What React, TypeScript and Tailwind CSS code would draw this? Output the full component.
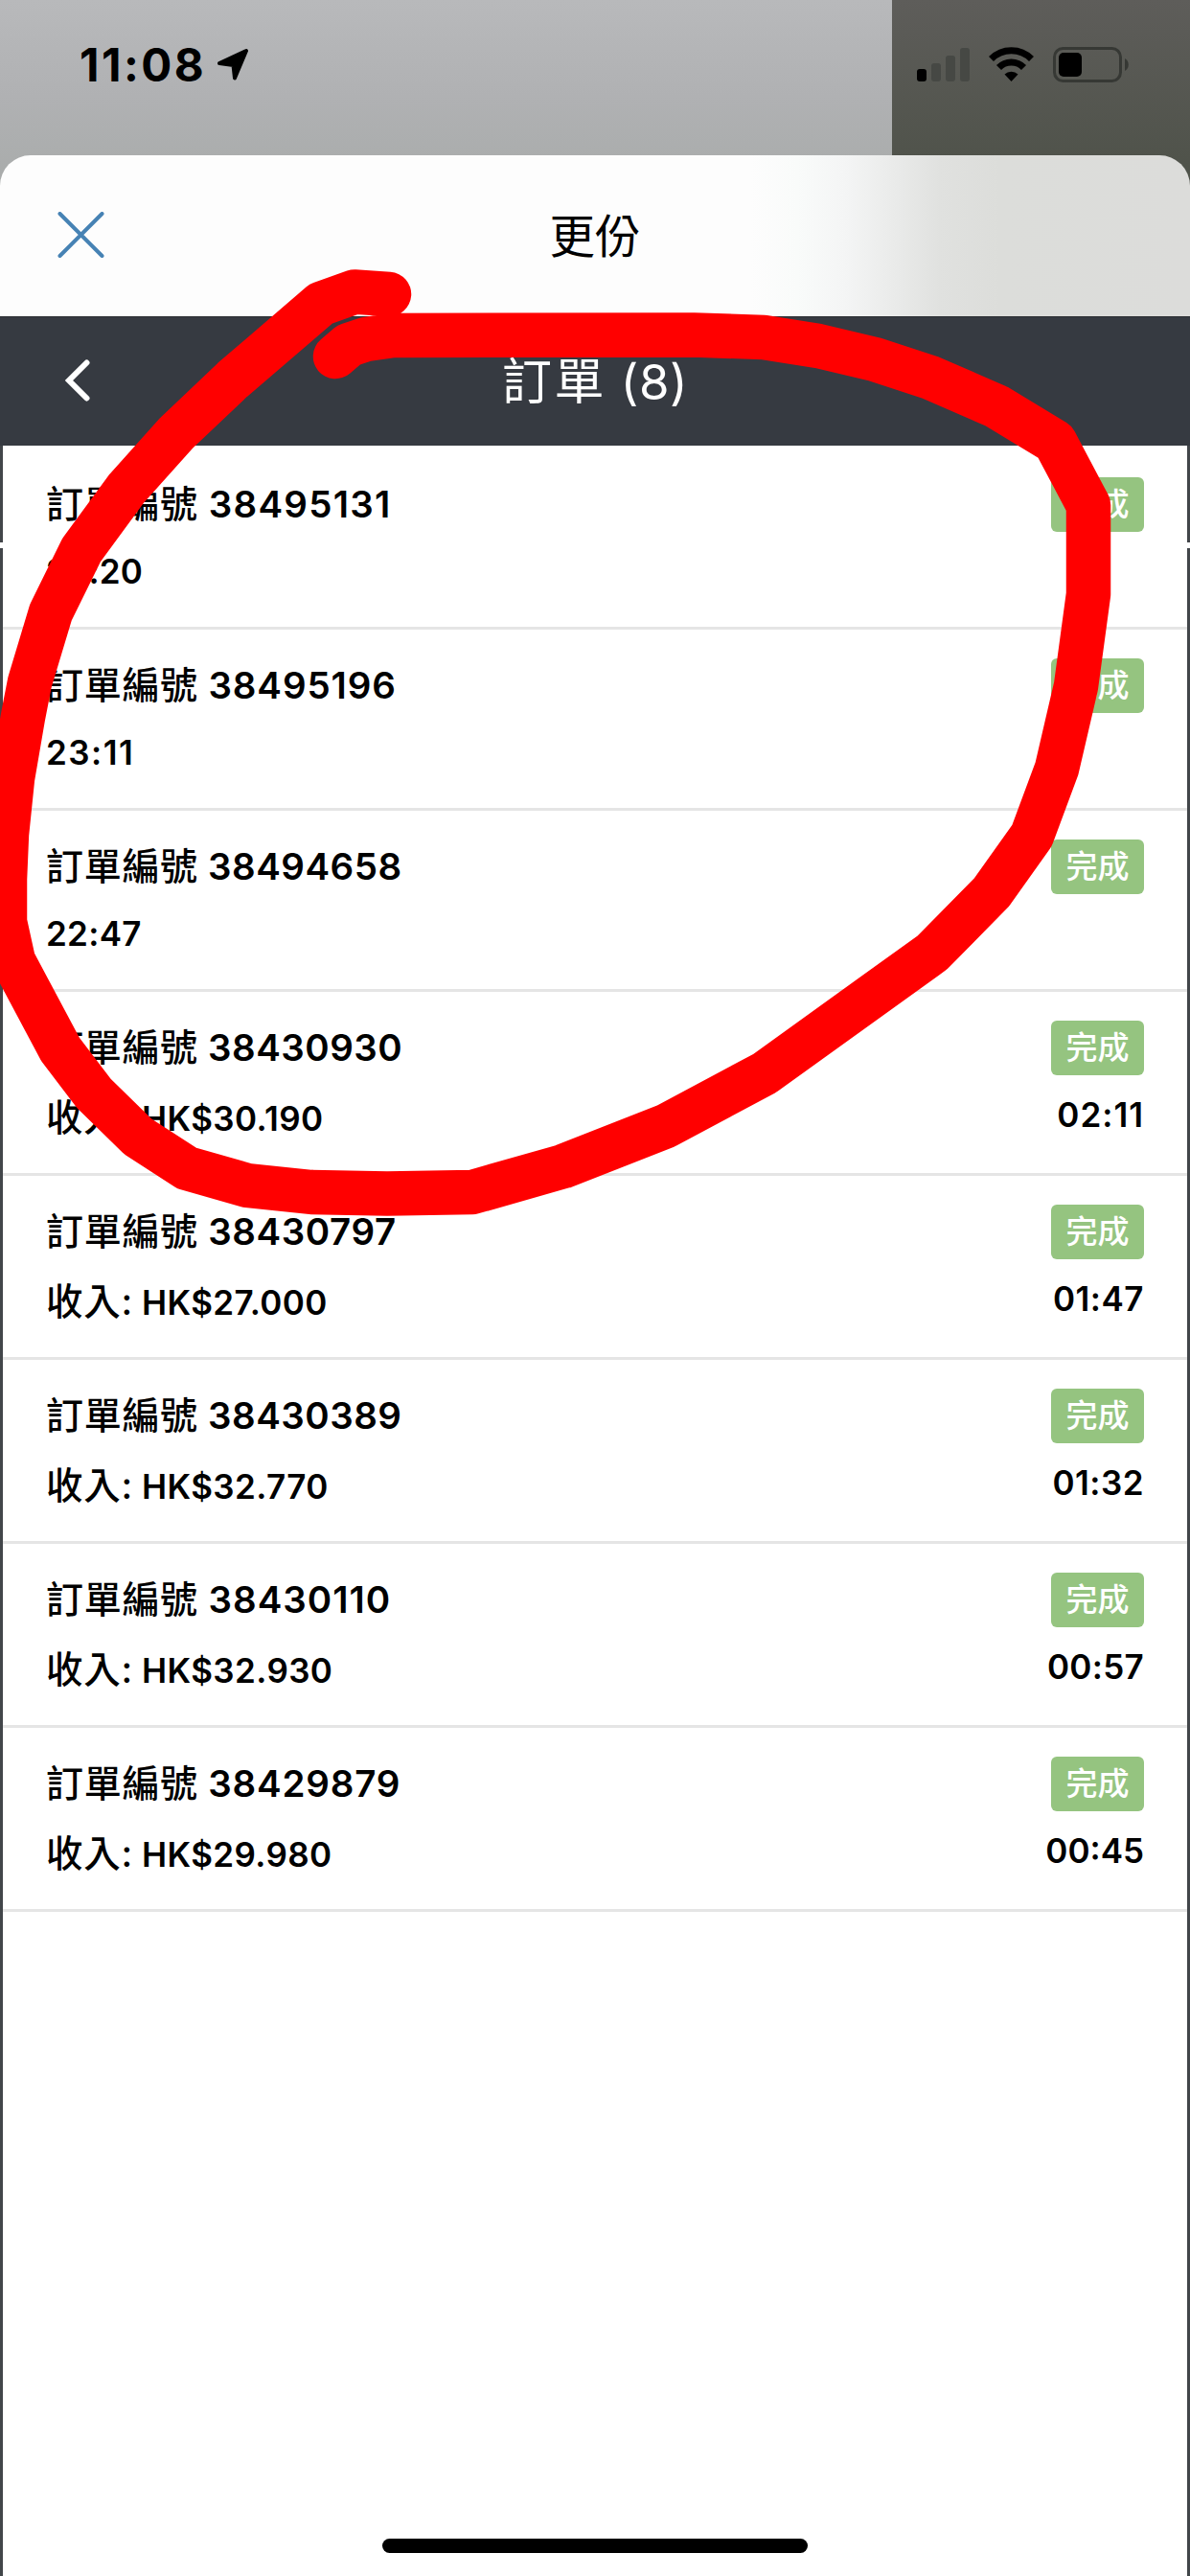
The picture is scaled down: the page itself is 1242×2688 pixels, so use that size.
const FONT = "font-['Inter','Noto_Sans_CJK_TC',sans-serif]";

type Order = { id: string; time: string; income?: string; idTracking: string; timeTracking: string };

const orders: Order[] = [
  { id: "38495131", time: "23:20", idTracking: "tracking-[1.25px]", timeTracking: "tracking-[0.2px]" },
  { id: "38495196", time: "23:11", idTracking: "tracking-[0.9px]", timeTracking: "tracking-[1.5px]" },
  { id: "38494658", time: "22:47", idTracking: "tracking-[0.5px]", timeTracking: "tracking-[0.3px]" },
  { id: "38430930", time: "02:11", income: "HK$30.190", idTracking: "tracking-[0.5px]", timeTracking: "tracking-[1px]" },
  { id: "38430797", time: "01:47", income: "HK$27.000", idTracking: "tracking-[0.6px]", timeTracking: "tracking-[0.5px]" },
  { id: "38430389", time: "01:32", income: "HK$32.770", idTracking: "tracking-[0.5px]", timeTracking: "tracking-[0.5px]" },
  { id: "38430110", time: "00:57", income: "HK$32.930", idTracking: "tracking-[1px]", timeTracking: "tracking-[0.3px]" },
  { id: "38429879", time: "00:45", income: "HK$29.980", idTracking: "tracking-[0.8px]", timeTracking: "tracking-[0px]" },
];

function StatusBar() {
  return (
    <div className="flex h-[200px] shrink-0 bg-linear-to-b from-[#b8b9bb] via-[#b0b1b3] via-50% to-[#a8abaa]">
      <div className="flex w-[931px] items-start pl-[83px]">
        <span className="mt-[38px] w-[143px] text-[47.5px] leading-[60px] font-bold tracking-[2.5px] whitespace-nowrap text-black">11:08</span>
        <svg className="mt-[50px] h-[34px] w-[34px]" viewBox="0 0 34 34">
          <path d="M31 3 L19 31.500 L17.500 18 L3 16 Z" fill="#000" stroke="#000" strokeWidth="4" strokeLinejoin="round" />
        </svg>
      </div>
      <div className="flex flex-1 items-start bg-linear-to-b from-[#5e5d5a] to-[#4d5148]">
        <svg className="mt-[48px] ml-[25px] h-[40px] w-[230px]" viewBox="956 48 230 40">
          <rect x="957" y="72" width="10" height="13" rx="3" fill="#000" />
          <rect x="972" y="66" width="10" height="19" rx="3" fill="#464844" />
          <rect x="987" y="58" width="10" height="27" rx="3" fill="#464844" />
          <rect x="1002" y="50" width="10" height="35" rx="3" fill="#464844" />
          <g fill="none" stroke="#000" strokeWidth="7">
            <path d="M1034.500 61.500 A29.500 29.500 0 0 1 1076.500 61.500" />
            <path d="M1042.500 70.500 A18 18 0 0 1 1068.500 70.500" />
          </g>
          <path d="M1055.500 85 L1048.500 77.500 A10 10 0 0 1 1062.500 77.500 Z" fill="#000" />
          <rect x="1100.500" y="50.500" width="69" height="34" rx="9" fill="none" stroke="#363834" strokeWidth="3" />
          <rect x="1105" y="55" width="24" height="25" rx="5" fill="#000" />
          <path d="M1174 61 A7.500 7.500 0 0 1 1174 74 Z" fill="#363834" />
        </svg>
      </div>
    </div>
  );
}

function SheetHeader() {
  return (
    <div className="relative -mt-[38px] grid h-[168px] shrink-0 grid-cols-3 items-center rounded-t-[32px] bg-[linear-gradient(90deg,#fdfdfd_0%,#fdfdfd_63%,#f9fbfa_67%,#f4f5f5_71%,#eaebea_75%,#e0e1df_79%,#dcddda_84%,#dcdcda_100%)]">
      <svg className="mb-[3px] ml-[60px] h-[48px] w-[49px]" viewBox="0 0 49 48">
        <path d="M2.500 2 L46.500 46 M46.500 2 L2.500 46" stroke="#4682b4" strokeWidth="4" strokeLinecap="round" />
      </svg>
      <h1 className="pt-[2px] text-center text-[47.5px] leading-[60px] font-normal text-black">更份</h1>
    </div>
  );
}

function NavBar() {
  return (
    <div className="grid h-[135px] shrink-0 grid-cols-3 items-center border-t border-[#2a2d31] bg-[#363a41]">
      <svg className="mb-[3px] ml-[67px] h-[44px] w-[28px]" viewBox="0 0 28 44">
        <path d="M23.500 3.500 L5 22 L23.500 40.500" fill="none" stroke="#fff" strokeWidth="6" strokeLinecap="round" strokeLinejoin="miter" />
      </svg>
      <h2 className="pt-[2px] text-center text-[51px] leading-[64px] font-normal tracking-[0.5px] text-white">
        <span className="text-[52px] tracking-[2.5px]">訂單</span> (8)
      </h2>
    </div>
  );
}

function OrderRow({ order }: { order: Order }) {
  return (
    <li className={`flex justify-between border-b-3 border-[#e5e5e5] pr-[45px] pl-[45px] ${order.income ? "h-[192px]" : "h-[189px]"}`}>
      <div className="flex flex-col pt-[30px]">
        <div className={`text-[38.5px] leading-[56px] font-semibold whitespace-nowrap ${order.idTracking}`}>
          <span className="text-[39px] font-medium tracking-[0.7px]">訂單編號</span> {order.id}
        </div>
        {order.income ? (
          <div className="mt-[17px] text-[35px] leading-[56px] font-semibold tracking-[0.4px] whitespace-nowrap">
            <span className="text-[38.5px] font-medium tracking-[0.7px]">收入:</span> {order.income}
          </div>
        ) : (
          <div className={`mt-[14px] text-[35px] leading-[56px] font-semibold ${order.timeTracking}`}>{order.time}</div>
        )}
      </div>
      <div className="flex flex-col items-end pt-[30px]">
        <span className="flex h-[57px] w-[97px] items-center justify-center rounded-[6px] bg-[#95c480] text-[33px] leading-none font-medium text-white">完成</span>
        {order.income && <span className={`mt-[13px] text-[35px] leading-[56px] font-semibold ${order.timeTracking}`}>{order.time}</span>}
      </div>
    </li>
  );
}

const STROKE: [number, number][] = [
  [406, 307], [370, 304.5], [335, 317], [243, 396], [184, 452], [132, 510], [85, 574], [53, 639],
  [31, 712], [24, 748], [13, 812], [7, 870], [5, 917], [5, 962], [14, 1003], [63, 1095], [98, 1141],
  [144, 1186], [195, 1219], [258, 1237], [325, 1244], [404, 1245.5], [493, 1244], [588, 1217],
  [695, 1175], [798, 1120], [973, 994], [1035, 931], [1077, 872], [1103, 802], [1123, 716],
  [1136, 620], [1136, 527], [1101, 461], [1040, 424], [971, 394], [913, 375], [854, 361],
  [797, 352], [724, 349.5], [410, 350], [382, 354], [364, 360], [350, 372],
];

function Scribble() {
  return (
    <svg className="pointer-events-none absolute inset-0 h-[2688px] w-[1242px]" viewBox="0 0 1242 2688">
      <polyline points={STROKE.map((p) => p.join(",")).join(" ")} fill="none" stroke="#ff0000" strokeWidth="46.500" strokeLinecap="round" strokeLinejoin="round" />
    </svg>
  );
}

export default function App() {
  return (
    <div className={`relative flex h-[2688px] w-[1242px] flex-col overflow-hidden bg-white text-black ${FONT}`}>
      <StatusBar />
      <SheetHeader />
      <NavBar />
      <main className="relative flex flex-1 flex-col border-x-3 border-[#42464a] pt-[3px]">
        <ul>
          {orders.map((o) => (
            <OrderRow key={o.id} order={o} />
          ))}
        </ul>
        <div className="mt-auto mb-[24px] h-[15px] w-[444px] self-center rounded-full bg-black" />
        <span className="absolute top-[101px] -left-[3px] h-[6px] w-[3px] bg-white" />
        <span className="absolute top-[101px] -right-[3px] h-[6px] w-[3px] bg-white" />
      </main>
      <Scribble />
    </div>
  );
}
